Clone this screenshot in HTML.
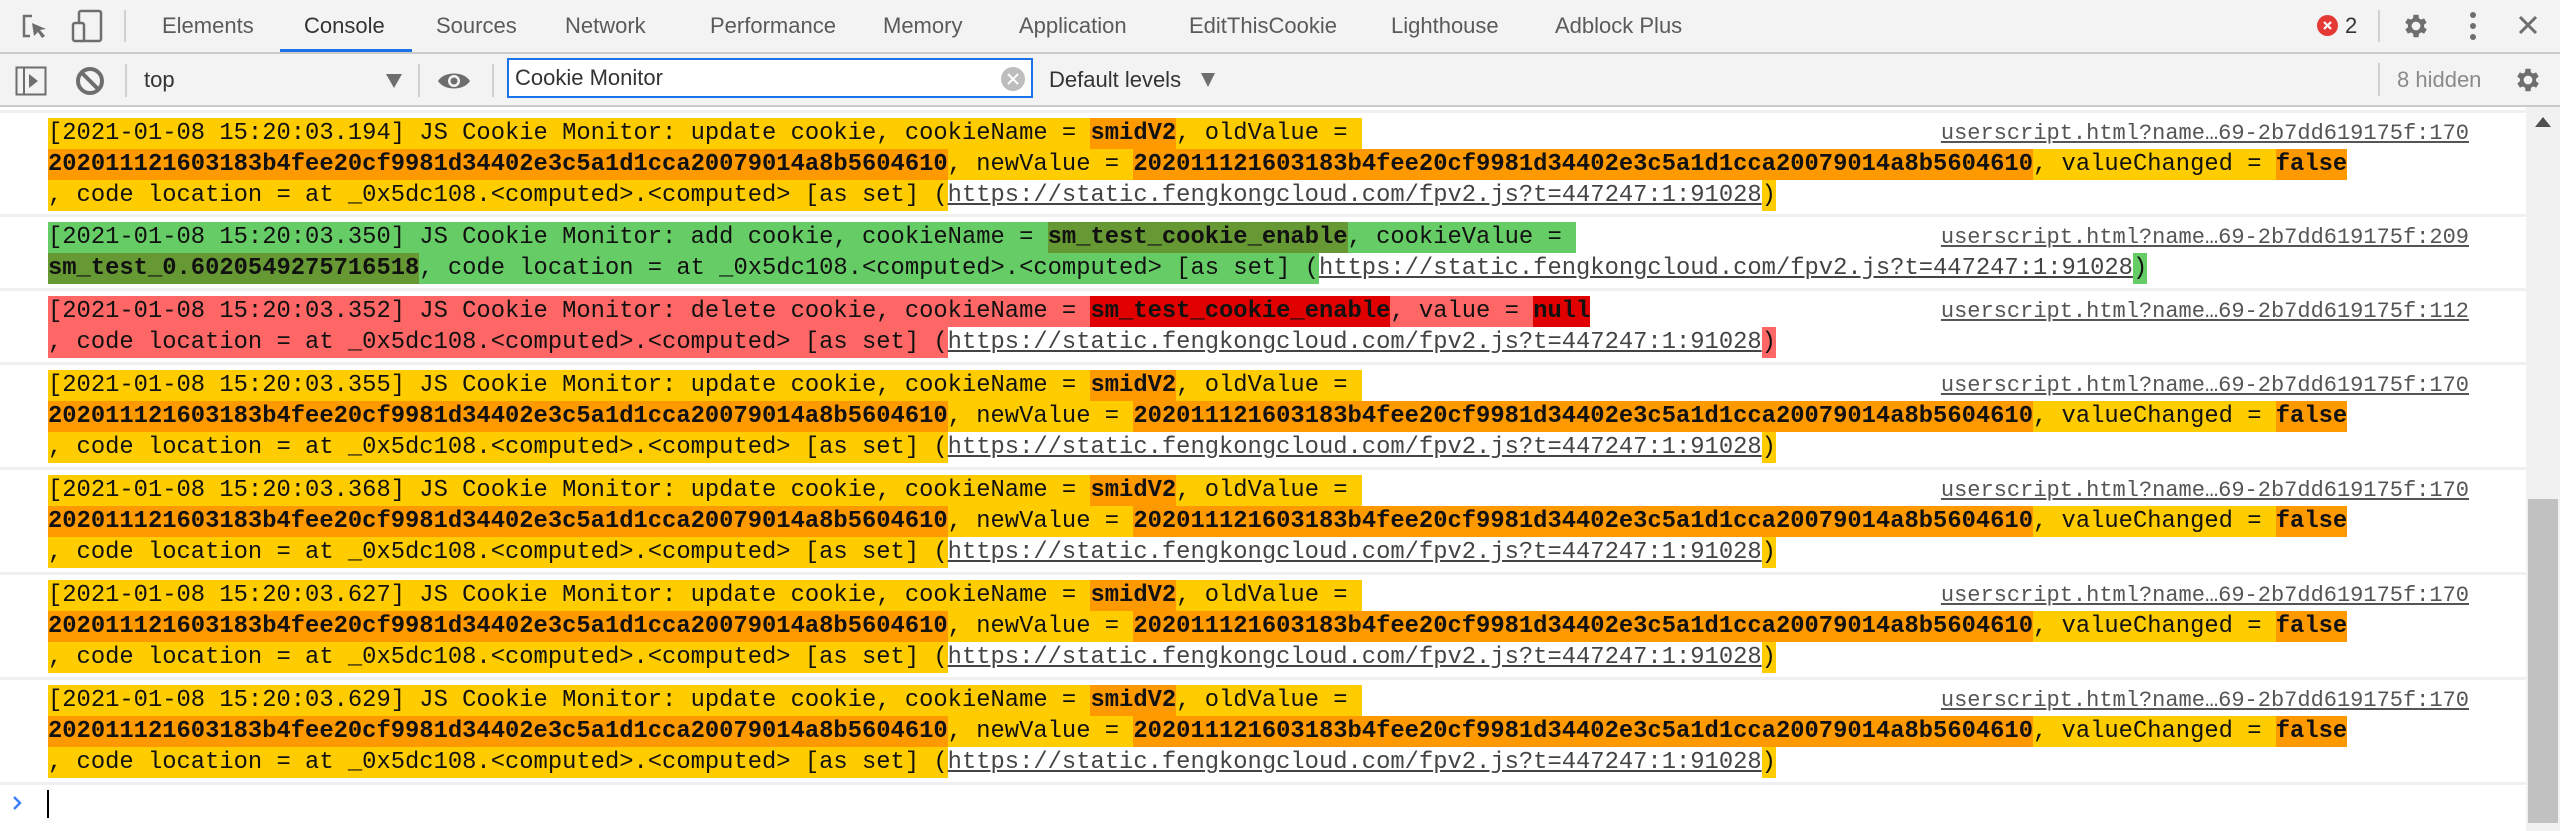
<!DOCTYPE html>
<html><head><meta charset="utf-8"><style>
*{margin:0;padding:0;box-sizing:border-box}
body{width:2560px;height:831px;background:#fff;overflow:hidden;position:relative;font-family:"Liberation Sans",sans-serif}
.tabbar{position:absolute;left:0;top:0;width:2560px;height:54px;background:#f3f3f3;border-bottom:2px solid #cbcbcb}
.tab{position:absolute;top:0;height:52px;line-height:52px;font-size:22px;color:#5a5a5a}
.tool{position:absolute;left:0;top:54px;width:2560px;height:53px;background:#f3f3f3;border-bottom:2px solid #cbcbcb}
.sep{position:absolute;width:2px;background:#d0d0d0}
.content{position:absolute;left:0;top:107px;width:2526px;height:724px;background:#fff}
.row{position:absolute;left:0;width:2526px;border-top:3px solid #f0f0f0}
.msg{position:absolute;left:48px;top:5px;font-family:"Liberation Mono",monospace;font-size:23.8px;color:#111;white-space:normal}
.ln{height:31px;line-height:31px;white-space:nowrap}
.ln span{display:inline-block;height:31px;vertical-align:top;white-space:pre}
.y{background:#ffcc00}.o{background:#ff9900;font-weight:bold}
.g{background:#66cc66}.dg{background:#669933;font-weight:bold}
.r{background:#ff6666}.dr{background:#e00000;font-weight:bold}
.lk{color:#444;text-decoration:underline;background:#fff}
.src{position:absolute;right:57px;top:5px;line-height:31px;font-family:"Liberation Mono",monospace;font-size:22px;color:#555;text-decoration:underline;white-space:pre}
</style></head><body>
<div class="tabbar">
<svg style="position:absolute;left:20px;top:12px" width="30" height="30" viewBox="0 0 30 30"><path d="M12 4H4v20h6" fill="none" stroke="#6e6e6e" stroke-width="2.5"/><path d="M12 11l14 6-6 1 5 6-3 2-4-6-4 4z" fill="#6e6e6e"/></svg>
<svg style="position:absolute;left:70px;top:9px" width="34" height="34" viewBox="0 0 34 34"><rect x="9" y="2" width="22" height="30" rx="2" fill="none" stroke="#6e6e6e" stroke-width="2.5"/><rect x="3" y="14" width="11" height="18" rx="2" fill="#f3f3f3" stroke="#6e6e6e" stroke-width="2.5"/></svg>
<div class="sep" style="left:124px;top:10px;height:32px"></div>
<div class="tab" style="left:162px">Elements</div>
<div class="tab" style="left:304px;color:#333">Console</div>
<div style="position:absolute;left:280px;top:49px;width:132px;height:3px;background:#1a73e8"></div>
<div class="tab" style="left:436px">Sources</div>
<div class="tab" style="left:565px">Network</div>
<div class="tab" style="left:710px">Performance</div>
<div class="tab" style="left:883px">Memory</div>
<div class="tab" style="left:1019px">Application</div>
<div class="tab" style="left:1189px">EditThisCookie</div>
<div class="tab" style="left:1391px">Lighthouse</div>
<div class="tab" style="left:1555px">Adblock Plus</div>
<svg style="position:absolute;left:2317px;top:15px" width="21" height="21"><circle cx="10.5" cy="10.5" r="10.5" fill="#e53935"/><path d="M7 7l7 7M14 7l-7 7" stroke="#fff" stroke-width="2.2"/></svg>
<div class="tab" style="left:2345px;color:#333">2</div>
<div class="sep" style="left:2378px;top:10px;height:32px"></div>
<svg style="position:absolute;left:2401px;top:11px" width="30" height="30" viewBox="0 0 24 24"><path fill="#6e6e6e" d="M19.4 13a7.5 7.5 0 0 0 0-2l2.1-1.6-2-3.5-2.5 1a7 7 0 0 0-1.7-1L15 3h-4l-.4 2.9a7 7 0 0 0-1.7 1l-2.5-1-2 3.5L6.6 11a7.5 7.5 0 0 0 0 2l-2.1 1.6 2 3.5 2.5-1a7 7 0 0 0 1.7 1L11 21h4l.4-2.9a7 7 0 0 0 1.7-1l2.5 1 2-3.5zM13 15.5a3.5 3.5 0 1 1 0-7 3.5 3.5 0 0 1 0 7z" transform="translate(-1 0)"/></svg>
<svg style="position:absolute;left:2466px;top:11px" width="14" height="30"><circle cx="7" cy="4" r="3" fill="#6e6e6e"/><circle cx="7" cy="15" r="3" fill="#6e6e6e"/><circle cx="7" cy="26" r="3" fill="#6e6e6e"/></svg>
<svg style="position:absolute;left:2518px;top:15px" width="20" height="20"><path d="M2 2l16 16M18 2L2 18" stroke="#6e6e6e" stroke-width="3"/></svg>
</div>
<div class="tool">
<svg style="position:absolute;left:15px;top:12px" width="32" height="30"><rect x="1.5" y="1.5" width="29" height="27" fill="none" stroke="#6e6e6e" stroke-width="2"/><line x1="9" y1="1" x2="9" y2="29" stroke="#6e6e6e" stroke-width="2"/><path d="M14 8l9 7-9 7z" fill="#6e6e6e"/></svg>
<svg style="position:absolute;left:75px;top:12px" width="30" height="30"><circle cx="15" cy="15" r="12" fill="none" stroke="#6e6e6e" stroke-width="4"/><path d="M7 7l16 16" stroke="#6e6e6e" stroke-width="4"/></svg>
<div class="sep" style="left:125px;top:10px;height:33px"></div>
<div class="tab" style="left:144px;line-height:52px;color:#333">top</div>
<svg style="position:absolute;left:386px;top:20px" width="16" height="14"><path d="M0 0h16L8 14z" fill="#6e6e6e"/></svg>
<div class="sep" style="left:418px;top:10px;height:33px"></div>
<svg style="position:absolute;left:436px;top:14px" width="36" height="26"><path d="M2 13C8 3 28 3 34 13 28 23 8 23 2 13z" fill="#6e6e6e"/><circle cx="18" cy="13" r="6" fill="#f3f3f3"/><circle cx="18" cy="13" r="3.5" fill="#6e6e6e"/></svg>
<div class="sep" style="left:492px;top:10px;height:33px"></div>
<div style="position:absolute;left:507px;top:4px;width:526px;height:40px;border:2px solid #1a73e8;background:#fff"><div style="position:absolute;left:6px;top:0;line-height:36px;font-size:22px;color:#333">Cookie Monitor</div>
<svg style="position:absolute;right:6px;top:7px" width="24" height="24"><circle cx="12" cy="12" r="12" fill="#bdbdbd"/><path d="M7 7l10 10M17 7L7 17" stroke="#fff" stroke-width="2"/></svg></div>
<div class="tab" style="left:1049px;color:#333">Default levels</div>
<svg style="position:absolute;left:1201px;top:19px" width="14" height="14"><path d="M0 0h14L7 14z" fill="#6e6e6e"/></svg>
<div class="sep" style="left:2378px;top:9px;height:33px"></div>
<div class="tab" style="left:2397px;color:#8a8a8a">8 hidden</div>
<svg style="position:absolute;left:2513px;top:11px" width="30" height="30" viewBox="0 0 24 24"><path fill="#6e6e6e" d="M19.4 13a7.5 7.5 0 0 0 0-2l2.1-1.6-2-3.5-2.5 1a7 7 0 0 0-1.7-1L15 3h-4l-.4 2.9a7 7 0 0 0-1.7 1l-2.5-1-2 3.5L6.6 11a7.5 7.5 0 0 0 0 2l-2.1 1.6 2 3.5 2.5-1a7 7 0 0 0 1.7 1L11 21h4l.4-2.9a7 7 0 0 0 1.7-1l2.5 1 2-3.5zM13 15.5a3.5 3.5 0 1 1 0-7 3.5 3.5 0 0 1 0 7z" transform="translate(-1 0)"/></svg>
</div>
<div class="content"></div>
<div style="position:absolute;left:2526px;top:107px;width:34px;height:724px;background:#f1f1f1"></div>
<svg style="position:absolute;left:2535px;top:117px" width="16" height="10"><path d="M0 10L8 0l8 10z" fill="#505050"/></svg>
<div style="position:absolute;left:2528px;top:499px;width:30px;height:324px;background:#c1c1c1"></div>

<div class="row" style="top:110px;height:106px"><div class="msg"><div class="ln"><span class="y">[2021-01-08 15:20:03.194] JS Cookie Monitor: update cookie, cookieName = </span><span class="o">smidV2</span><span class="y">, oldValue = </span></div><div class="ln"><span class="o">202011121603183b4fee20cf9981d34402e3c5a1d1cca20079014a8b5604610</span><span class="y">, newValue = </span><span class="o">202011121603183b4fee20cf9981d34402e3c5a1d1cca20079014a8b5604610</span><span class="y">, valueChanged = </span><span class="o">false</span></div><div class="ln"><span class="y">, code location = at _0x5dc108.&lt;computed&gt;.&lt;computed&gt; [as set] (</span><span class="lk">https://static.fengkongcloud.com/fpv2.js?t=447247:1:91028</span><span class="y">)</span></div></div><div class="src">userscript.html?name…69-2b7dd619175f:170</div></div>

<div class="row" style="top:214px;height:76px"><div class="msg"><div class="ln"><span class="g">[2021-01-08 15:20:03.350] JS Cookie Monitor: add cookie, cookieName = </span><span class="dg">sm_test_cookie_enable</span><span class="g">, cookieValue = </span></div><div class="ln"><span class="dg">sm_test_0.6020549275716518</span><span class="g">, code location = at _0x5dc108.&lt;computed&gt;.&lt;computed&gt; [as set] (</span><span class="lk">https://static.fengkongcloud.com/fpv2.js?t=447247:1:91028</span><span class="g">)</span></div></div><div class="src">userscript.html?name…69-2b7dd619175f:209</div></div>

<div class="row" style="top:288px;height:76px"><div class="msg"><div class="ln"><span class="r">[2021-01-08 15:20:03.352] JS Cookie Monitor: delete cookie, cookieName = </span><span class="dr">sm_test_cookie_enable</span><span class="r">, value = </span><span class="dr">null</span></div><div class="ln"><span class="r">, code location = at _0x5dc108.&lt;computed&gt;.&lt;computed&gt; [as set] (</span><span class="lk">https://static.fengkongcloud.com/fpv2.js?t=447247:1:91028</span><span class="r">)</span></div></div><div class="src">userscript.html?name…69-2b7dd619175f:112</div></div>

<div class="row" style="top:362px;height:107px"><div class="msg"><div class="ln"><span class="y">[2021-01-08 15:20:03.355] JS Cookie Monitor: update cookie, cookieName = </span><span class="o">smidV2</span><span class="y">, oldValue = </span></div><div class="ln"><span class="o">202011121603183b4fee20cf9981d34402e3c5a1d1cca20079014a8b5604610</span><span class="y">, newValue = </span><span class="o">202011121603183b4fee20cf9981d34402e3c5a1d1cca20079014a8b5604610</span><span class="y">, valueChanged = </span><span class="o">false</span></div><div class="ln"><span class="y">, code location = at _0x5dc108.&lt;computed&gt;.&lt;computed&gt; [as set] (</span><span class="lk">https://static.fengkongcloud.com/fpv2.js?t=447247:1:91028</span><span class="y">)</span></div></div><div class="src">userscript.html?name…69-2b7dd619175f:170</div></div>

<div class="row" style="top:467px;height:107px"><div class="msg"><div class="ln"><span class="y">[2021-01-08 15:20:03.368] JS Cookie Monitor: update cookie, cookieName = </span><span class="o">smidV2</span><span class="y">, oldValue = </span></div><div class="ln"><span class="o">202011121603183b4fee20cf9981d34402e3c5a1d1cca20079014a8b5604610</span><span class="y">, newValue = </span><span class="o">202011121603183b4fee20cf9981d34402e3c5a1d1cca20079014a8b5604610</span><span class="y">, valueChanged = </span><span class="o">false</span></div><div class="ln"><span class="y">, code location = at _0x5dc108.&lt;computed&gt;.&lt;computed&gt; [as set] (</span><span class="lk">https://static.fengkongcloud.com/fpv2.js?t=447247:1:91028</span><span class="y">)</span></div></div><div class="src">userscript.html?name…69-2b7dd619175f:170</div></div>

<div class="row" style="top:572px;height:107px"><div class="msg"><div class="ln"><span class="y">[2021-01-08 15:20:03.627] JS Cookie Monitor: update cookie, cookieName = </span><span class="o">smidV2</span><span class="y">, oldValue = </span></div><div class="ln"><span class="o">202011121603183b4fee20cf9981d34402e3c5a1d1cca20079014a8b5604610</span><span class="y">, newValue = </span><span class="o">202011121603183b4fee20cf9981d34402e3c5a1d1cca20079014a8b5604610</span><span class="y">, valueChanged = </span><span class="o">false</span></div><div class="ln"><span class="y">, code location = at _0x5dc108.&lt;computed&gt;.&lt;computed&gt; [as set] (</span><span class="lk">https://static.fengkongcloud.com/fpv2.js?t=447247:1:91028</span><span class="y">)</span></div></div><div class="src">userscript.html?name…69-2b7dd619175f:170</div></div>

<div class="row" style="top:677px;height:107px"><div class="msg"><div class="ln"><span class="y">[2021-01-08 15:20:03.629] JS Cookie Monitor: update cookie, cookieName = </span><span class="o">smidV2</span><span class="y">, oldValue = </span></div><div class="ln"><span class="o">202011121603183b4fee20cf9981d34402e3c5a1d1cca20079014a8b5604610</span><span class="y">, newValue = </span><span class="o">202011121603183b4fee20cf9981d34402e3c5a1d1cca20079014a8b5604610</span><span class="y">, valueChanged = </span><span class="o">false</span></div><div class="ln"><span class="y">, code location = at _0x5dc108.&lt;computed&gt;.&lt;computed&gt; [as set] (</span><span class="lk">https://static.fengkongcloud.com/fpv2.js?t=447247:1:91028</span><span class="y">)</span></div></div><div class="src">userscript.html?name…69-2b7dd619175f:170</div></div>

<div style="position:absolute;left:0;top:782px;width:2526px;border-top:3px solid #f0f0f0"></div>
<svg style="position:absolute;left:12px;top:795px" width="10" height="16"><path d="M2 2l6 6-6 6" fill="none" stroke="#3b82f6" stroke-width="2.5"/></svg>
<div style="position:absolute;left:47px;top:790px;width:2px;height:28px;background:#000"></div>
</body></html>
